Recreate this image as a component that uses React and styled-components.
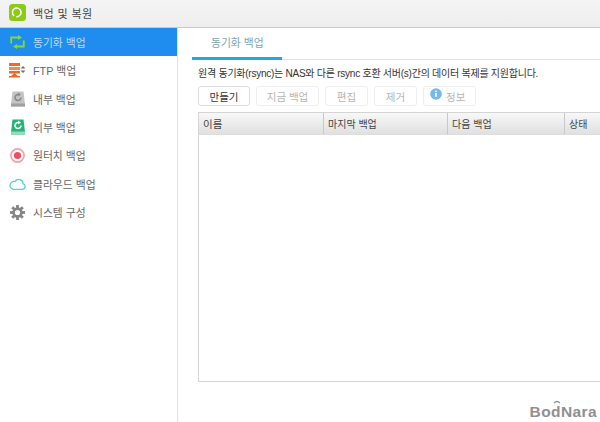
import React from 'react';
import styled, { createGlobalStyle } from 'styled-components';

const Global = createGlobalStyle`
  html, body { margin: 0; padding: 0; background: #fff; }
  #root { width: 600px; height: 422px; overflow: hidden; }
  * { box-sizing: border-box; }
`;

const Page = styled.div`
  position: relative;
  width: 600px;
  height: 422px;
  display: flex;
  flex-direction: column;
  font-family: "Liberation Sans", "Noto Sans CJK KR", sans-serif;
  color: #444;
  overflow: hidden;
`;

const TitleBar = styled.header`
  height: 28px;
  flex: none;
  display: flex;
  align-items: center;
  padding: 0 0 2px 9px;
  gap: 7px;
  background: linear-gradient(#f4f4f4, #eeeeee);
  border-bottom: 1px solid #c9c9c9;
  font-size: 11px;
  letter-spacing: 0.4px;
  color: #444;
`;

const Body = styled.div`
  flex: 1;
  display: flex;
  min-height: 0;
`;

const Sidebar = styled.nav`
  width: 178px;
  flex: none;
  border-right: 1px solid #e2e2e2;
  display: flex;
  flex-direction: column;
`;

const NavItem = styled.div`
  height: 28.33px;
  display: flex;
  align-items: center;
  padding-left: 9px;
  gap: 7px;
  font-size: 10.8px;
  background: ${p => (p.$active ? '#1f8cf0' : 'transparent')};
  color: ${p => (p.$active ? '#b9dcf8' : '#666')};
`;

const IconBox = styled.span`
  width: 17px;
  height: 17px;
  display: flex;
  flex: none;
  align-items: center;
  justify-content: center;
`;

const Main = styled.main`
  flex: 1;
  min-width: 0;
  display: flex;
  flex-direction: column;
  padding: 0 0 0 14px;
`;

const Tabs = styled.div`
  height: 32px;
  flex: none;
  border-bottom: 1px solid #e4e4e4;
  display: flex;
`;

const Tab = styled.div`
  width: 90px;
  margin-bottom: -1px;
  padding: 6px 0 0 19px;
  font-size: 10.8px;
  color: #7fa5b2;
  border-bottom: 3px solid #22a7e6;
`;

const Description = styled.p`
  margin: 6px 0 0 6px;
  font-size: 10px;
  letter-spacing: -0.25px;
  line-height: 16px;
  color: #333;
  white-space: nowrap;
`;

const Toolbar = styled.div`
  display: flex;
  gap: 6px;
  margin: 4px 0 0 6px;
`;

const Button = styled.button`
  height: 20px;
  width: ${p => p.$w}px;
  padding: 0 0 0 ${p => (p.$start ? '6px' : '0')};
  display: flex;
  align-items: center;
  justify-content: ${p => (p.$start ? 'flex-start' : 'center')};
  gap: 4px;
  font-family: inherit;
  font-size: 10.5px;
  background: #fff;
  border: 1px solid ${p => (p.disabled ? '#eeeeee' : '#dddddd')};
  border-radius: 3px;
  color: ${p => (p.disabled ? '#b5b5b5' : '#333')};
`;

const InfoGlyph = styled.svg`
  margin-bottom: 5px;
`;

const Table = styled.div`
  width: 402px;
  height: 270px;
  margin: 6px 0 0 6px;
  border: 1px solid #d4d4d4;
  border-right: 0;
`;

const HeaderRow = styled.div`
  height: 22px;
  display: grid;
  grid-template-columns: 124px 124px 117px 1fr;
  background: linear-gradient(#f8f8f8, #e0e0e0);
  border-bottom: 1px solid #dcdcdc;
`;

const HeaderCell = styled.div`
  display: flex;
  align-items: center;
  padding-left: 4px;
  font-size: ${p => (p.$first ? '10.5px' : '10px')};
  color: #444;
  border-left: ${p => (p.$first ? '0' : '1px solid #c8c8c8')};
`;

const Watermark = styled.div`
  position: absolute;
  right: 3px;
  bottom: 1px;
  font-family: "Liberation Sans", sans-serif;
  font-weight: 700;
  font-size: 15.5px;
  line-height: 18px;
  letter-spacing: 0.4px;
  color: #909090;
`;

const WatermarkAccent = styled.svg`
  position: absolute;
  left: 23px;
  top: -3px;
`;

const SyncIcon = () => (
  <svg width="15" height="14" viewBox="0 0 15 14" fill="none">
    <path d="M1.2 8.5V2.5H8M13.8 5.5V11.5H7" stroke="#82dc2a" strokeWidth="1.8" />
    <path d="M8 0L8 5L12 2.5ZM7 9V14L3 11.5Z" fill="#82dc2a" />
  </svg>
);

const FtpIcon = () => (
  <svg width="17" height="15" viewBox="0 0 17 15">
    <rect x="0" y="0" width="11" height="3" fill="#ea6a30" />
    <rect x="0" y="4" width="11" height="3" fill="#f08d4a" />
    <rect x="0" y="8" width="11" height="2.5" fill="#ea6a30" />
    <path d="M5.5 10L9 13H2Z" fill="#ea6a30" />
    <rect x="0" y="13" width="11" height="1.5" fill="#ea6a30" />
    <path d="M14 3L16.5 5.5H11.5ZM14 10L11.5 7.5H16.5Z" fill="#6f6f6f" />
  </svg>
);

const DiskIcon = ({ c1, c2, c3 }) => (
  <svg width="14" height="16" viewBox="0 0 14 16" fill="none">
    <path d="M1.5 0.5H12.5L14 13V15.5H0V13Z" fill={c1} />
    <rect x="0" y="12.5" width="14" height="3" fill={c2} />
    <path d="M10 6.5A3 3 0 1 1 7.5 3.5" stroke={c3} strokeWidth="1.6" />
    <path d="M7 1.5L10 3.5L7 5.5Z" fill={c3} />
  </svg>
);

const TargetIcon = () => (
  <svg width="15" height="15" viewBox="0 0 15 15">
    <circle cx="7.5" cy="7.5" r="6.6" fill="#fff" stroke="#f2a0a8" strokeWidth="1.6" />
    <circle cx="7.5" cy="7.5" r="3.6" fill="#f0505c" />
  </svg>
);

const CloudIcon = () => (
  <svg width="17" height="12" viewBox="0 0 17 12" fill="none">
    <path
      d="M4 11.3H13.2A2.9 2.9 0 0 0 14 5.6A4.3 4.3 0 0 0 6 3.6A3.9 3.9 0 0 0 4 11.3Z"
      stroke="#55cdea"
      strokeWidth="1.3"
    />
  </svg>
);

const GearIcon = () => (
  <svg width="15" height="15" viewBox="0 0 15 15" fill="none">
    <circle cx="7.5" cy="7.5" r="3.9" stroke="#858585" strokeWidth="2.6" />
    {[0, 45, 90, 135, 180, 225, 270, 315].map(a => (
      <rect key={a} x="6.1" y="0" width="2.8" height="3" fill="#858585" transform={`rotate(${a} 7.5 7.5)`} />
    ))}
  </svg>
);

const AppIcon = () => (
  <svg width="17" height="17" viewBox="0 0 17 17" fill="none">
    <rect width="17" height="17" rx="3.5" fill="#8ccb14" />
    <path d="M5.2 11.8A4.3 4.3 0 1 1 7.2 12.6" stroke="#fff" strokeWidth="1.5" />
  </svg>
);

const InfoIcon = () => (
  <InfoGlyph width="12" height="12" viewBox="0 0 12 12">
    <circle cx="6" cy="6" r="5.8" fill="#74b8ee" />
    <rect x="5.2" y="5" width="1.6" height="4" fill="#fff" />
    <rect x="5.2" y="2.6" width="1.6" height="1.5" fill="#fff" />
  </InfoGlyph>
);

const navItems = [
  { label: '동기화 백업', icon: <SyncIcon />, active: true },
  { label: 'FTP 백업', icon: <FtpIcon /> },
  { label: '내부 백업', icon: <DiskIcon c1="#c4c4c4" c2="#a0a0a0" c3="#8a8a8a" /> },
  { label: '외부 백업', icon: <DiskIcon c1="#22b573" c2="#9ad8bb" c3="#fff" /> },
  { label: '원터치 백업', icon: <TargetIcon /> },
  { label: '클라우드 백업', icon: <CloudIcon /> },
  { label: '시스템 구성', icon: <GearIcon /> },
];

const App = () => (
  <Page>
    <Global />
    <TitleBar>
      <AppIcon />
      <span>백업 및 복원</span>
    </TitleBar>
    <Body>
      <Sidebar>
        {navItems.map(item => (
          <NavItem key={item.label} $active={item.active}>
            <IconBox>{item.icon}</IconBox>
            {item.label}
          </NavItem>
        ))}
      </Sidebar>
      <Main>
        <Tabs>
          <Tab>동기화 백업</Tab>
        </Tabs>
        <Description>
          원격 동기화(rsync)는 NAS와 다른 rsync 호환 서버(s)간의 데이터 복제를 지원합니다.
        </Description>
        <Toolbar>
          <Button $w={52}>만들기</Button>
          <Button $w={63} disabled>지금 백업</Button>
          <Button $w={43} disabled>편집</Button>
          <Button $w={43} disabled>제거</Button>
          <Button $w={53} $start disabled><InfoIcon />정보</Button>
        </Toolbar>
        <Table>
          <HeaderRow>
            <HeaderCell $first>이름</HeaderCell>
            <HeaderCell>마지막 백업</HeaderCell>
            <HeaderCell>다음 백업</HeaderCell>
            <HeaderCell>상태</HeaderCell>
          </HeaderRow>
        </Table>
      </Main>
    </Body>
    <Watermark>
      BodNara
      <WatermarkAccent width="8" height="5" viewBox="0 0 8 5" fill="none">
        <path d="M1 3Q4 0 7 3" stroke="#909090" strokeWidth="1.2" />
      </WatermarkAccent>
    </Watermark>
  </Page>
);

export default App;
